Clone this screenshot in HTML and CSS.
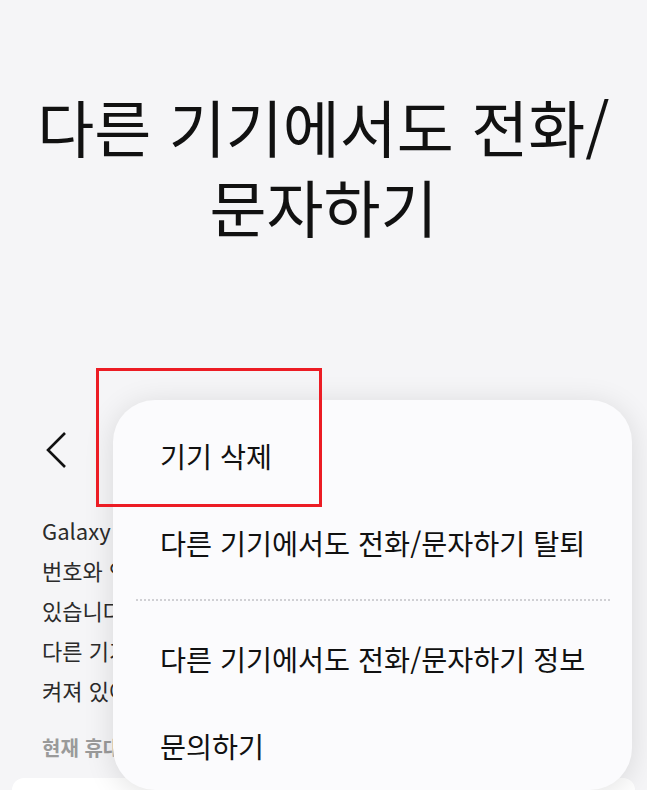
FILE: index.html
```html
<!DOCTYPE html>
<html lang="ko">

<head>
    <meta charset="UTF-8">
    <meta name="viewport" content="width=device-width, initial-scale=1.0">
    <title>다른 기기에서도 전화/문자하기</title>
    <link rel="stylesheet" href="styles.css">
</head>

<body>
    <div class="page">

        <!-- big title -->
        <h1 class="title">다른 기기에서도 전화/<br>문자하기</h1>

        <!-- back button row -->
        <div class="toolbar">
            <button class="back" aria-label="뒤로">
                <svg width="24" height="38" viewBox="0 0 24 38">
                    <path d="M21 2 L4 19 L21 36" fill="none" stroke="#111" stroke-width="2.6" />
                </svg>
            </button>
        </div>

        <!-- description -->
        <p class="desc">
            <span>Galaxy 계정에 로그인한 다른 기기에서 휴대전화</span>
            <span>번호와 연결된 전화를 걸고 받거나 문자를 주고받을 수</span>
            <span>있습니다. 이 기능을 사용하려면 휴대전화와</span>
            <span>다른 기기 모두에서 이 기능이</span>
            <span>켜져 있어야 합니다.</span>
        </p>

        <p class="label">현재 휴대전화</p>
        <div class="card"></div>
    </div>

    <!-- popup menu -->
    <div class="menu">
        <div class="item">기기 삭제</div>
        <div class="item">다른 기기에서도 전화/문자하기 탈퇴</div>
        <div class="divider"></div>
        <div class="item">다른 기기에서도 전화/문자하기 정보</div>
        <div class="item">문의하기</div>
    </div>

    <!-- highlight box -->
    <div class="highlight"></div>
</body>

</html>
```

FILE: styles.css
```css
html,
body {
    height: 790px;
    overflow: hidden;
}

body {
    margin: 0;
    background: #f5f5f7;
    font-family: "Noto Sans CJK KR", "Noto Sans", sans-serif;
    color: #111;
}

.page {
    display: flex;
    flex-direction: column;
}

.title {
    margin: 86px 0 0;
    font-size: 62px;
    font-weight: 400;
    line-height: 80px;
    text-align: center;
}

.toolbar {
    margin-top: 174px;
    height: 60px;
    display: flex;
    align-items: center;
    padding-left: 34px;
}

.back {
    background: none;
    border: none;
    padding: 0 10px;
    display: flex;
}

.desc {
    margin: 30px 0 0;
    padding-left: 42px;
    display: flex;
    flex-direction: column;
    font-size: 22px;
    line-height: 40px;
    color: #2b2b2b;
    white-space: nowrap;
}

.label {
    margin: 18px 0 0;
    padding-left: 42px;
    font-size: 20px;
    font-weight: 700;
    line-height: 40px;
    color: #9a9a9a;
}

.card {
    margin: 10px 12px 0;
    height: 12px;
    background: #fff;
    border-radius: 26px 26px 0 0;
}

.menu {
    position: absolute;
    left: 113px;
    top: 400px;
    width: 519px;
    height: 390px;
    background: #fbfbfd;
    border-radius: 42px;
    box-shadow: 0 4px 30px rgba(0, 0, 0, 0.12);
    padding: 12px 0 0;
    box-sizing: border-box;
}

.item {
    padding-left: 47px;
    font-size: 28.3px;
    line-height: 87px;
}

.divider {
    margin: 13px 22px 14px 23px;
    border-top: 2px dotted #d0d0d4;
}

.highlight {
    position: absolute;
    left: 96px;
    top: 368px;
    width: 220px;
    height: 133px;
    border: 3px solid #ec1c24;
}
```
